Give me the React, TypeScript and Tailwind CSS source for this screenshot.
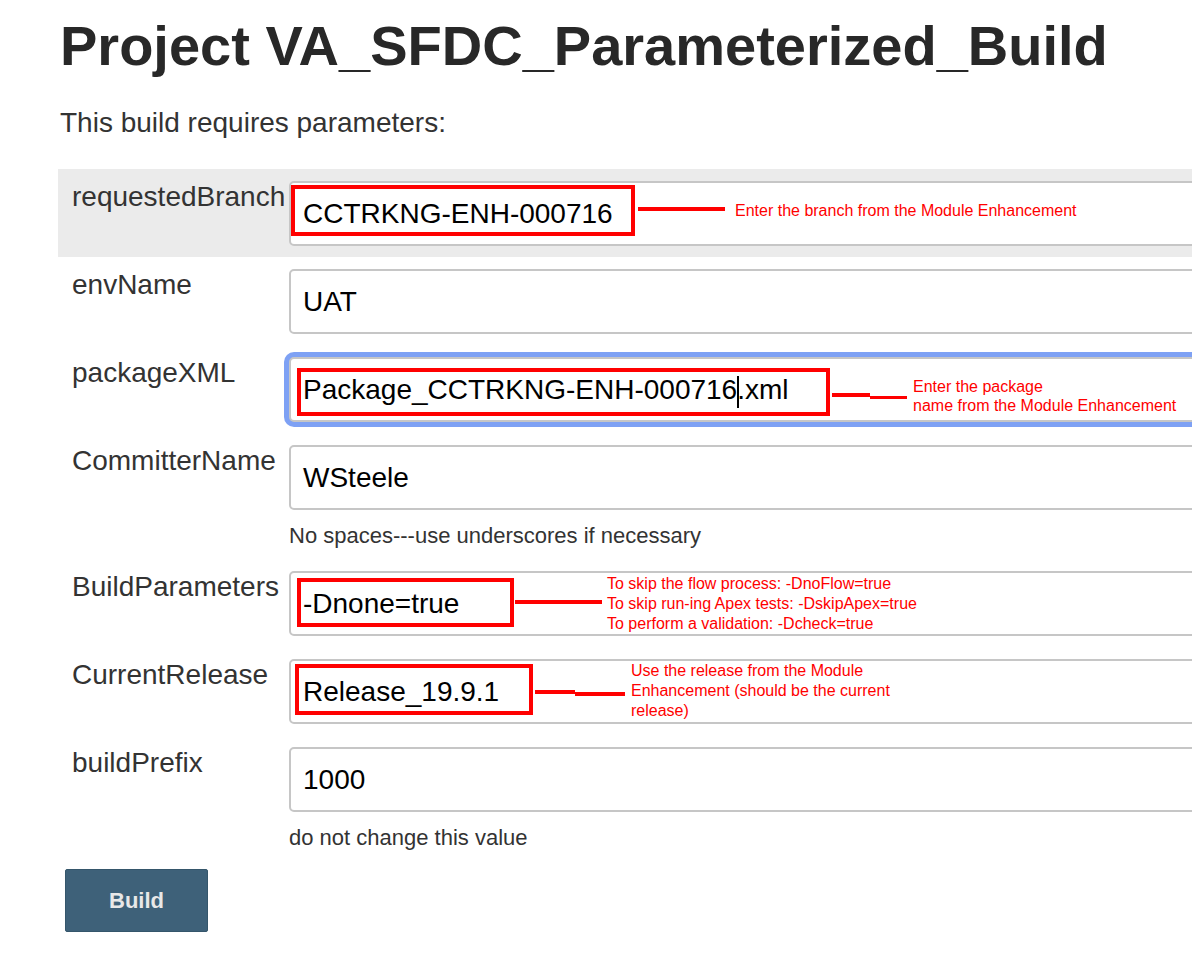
import type { ReactNode } from 'react'

type ParamProps = {
  label: string
  value: ReactNode
  hint?: string
  shaded?: boolean
  focused?: boolean
  children?: ReactNode
}

function Param({ label, value, hint, shaded, focused, children }: ParamProps) {
  return (
    <div className={`flex pt-[12px] ${hint ? 'pb-[10px]' : 'pb-[11px]'} ${shaded ? 'bg-[#ebebeb]' : ''}`}>
      <div className="w-[231px] shrink-0 pl-[14px] text-[28px] leading-[32px] text-[#333]">
        {label}
      </div>
      <div className="flex-1">
        <div
          className={`relative h-[65px] rounded-[5px] border-2 border-[#c6c6c6] bg-white pl-[12px] text-[28px] leading-[61px] text-black whitespace-nowrap ${
            focused ? 'ring-[5px] ring-[#7ea1f4]' : ''
          }`}
        >
          {value}
          {children}
        </div>
        {hint && (
          <div className="mt-[13px] text-[22px] leading-[26px] text-[#333]">{hint}</div>
        )}
      </div>
    </div>
  )
}

// red annotation marks drawn over the screenshot
function RedBox({ className }: { className: string }) {
  return <div className={`absolute border-4 border-[#ff0000] ${className}`} />
}

function RedLine({ className }: { className: string }) {
  return <div className={`absolute bg-[#ff0000] ${className}`} />
}

function Note({ className, children }: { className: string; children: ReactNode }) {
  return (
    <div className={`absolute text-[16px] text-[#ff0000] whitespace-nowrap ${className}`}>
      {children}
    </div>
  )
}

export default function App() {
  return (
    <div
      className="w-[1192px] h-[968px] overflow-hidden bg-white"
      style={{ fontFamily: '"Liberation Sans", Arial, sans-serif' }}
    >
      <div className="w-[1320px] pl-[58px]">
        <h1 className="pl-[2px] pt-[14px] text-[56px] font-bold leading-[64px] text-[#282828]">
          Project VA_SFDC_Parameterized_Build
        </h1>
        <p className="mt-[29px] pl-[2px] text-[28px] leading-[32px] text-[#333]">
          This build requires parameters:
        </p>

        <div className="mt-[30px]">
          <Param label="requestedBranch" value="CCTRKNG-ENH-000716" shaded>
            <RedBox className="left-0 top-[2px] w-[344px] h-[51px]" />
            <RedLine className="left-[347px] top-[24px] w-[87px] h-[4px]" />
            <Note className="left-[444px] top-[18px] leading-[20px]">
              Enter the branch from the Module Enhancement
            </Note>
          </Param>

          <Param label="envName" value="UAT" />

          <Param
            label="packageXML"
            focused
            value={
              <>
                Package_CCTRKNG-ENH-000716
                <span className="inline-block align-middle w-[1.5px] h-[32px] -mr-[1.5px] bg-black" />
                .xml
              </>
            }
          >
            <RedBox className="left-[6px] top-[9px] w-[533px] h-[48px]" />
            <RedLine className="left-[541px] top-[34px] w-[38px] h-[4px]" />
            <RedLine className="left-[579px] top-[37px] w-[37px] h-[3px]" />
            <Note className="left-[622px] top-[18px] leading-[19px]">
              Enter the package
              <br />
              name from the Module Enhancement
            </Note>
          </Param>

          <Param label="CommitterName" value="WSteele" hint="No spaces---use underscores if necessary" />

          <Param label="BuildParameters" value="-Dnone=true">
            <RedBox className="left-[6px] top-[5px] w-[217px] h-[49px]" />
            <RedLine className="left-[224px] top-[27px] w-[87px] h-[4px]" />
            <Note className="left-[316px] top-[1px] leading-[20px]">
              To skip the flow process: -DnoFlow=true
              <br />
              To skip run-ing Apex tests: -DskipApex=true
              <br />
              To perform a validation: -Dcheck=true
            </Note>
          </Param>

          <Param label="CurrentRelease" value="Release_19.9.1">
            <RedBox className="left-[4px] top-[3px] w-[238px] h-[51px]" />
            <RedLine className="left-[244px] top-[29px] w-[40px] h-[4px]" />
            <RedLine className="left-[284px] top-[31px] w-[50px] h-[4px]" />
            <Note className="left-[340px] top-0 leading-[20px]">
              Use the release from the Module
              <br />
              Enhancement (should be the current
              <br />
              release)
            </Note>
          </Param>

          <Param label="buildPrefix" value="1000" hint="do not change this value" />
        </div>

        <button className="mt-[8px] ml-[7px] h-[63px] w-[143px] rounded-[2px] border border-[#35566b] bg-[#3e6179] text-[22px] font-bold text-[#e8e8e8]">
          Build
        </button>
      </div>
    </div>
  )
}
